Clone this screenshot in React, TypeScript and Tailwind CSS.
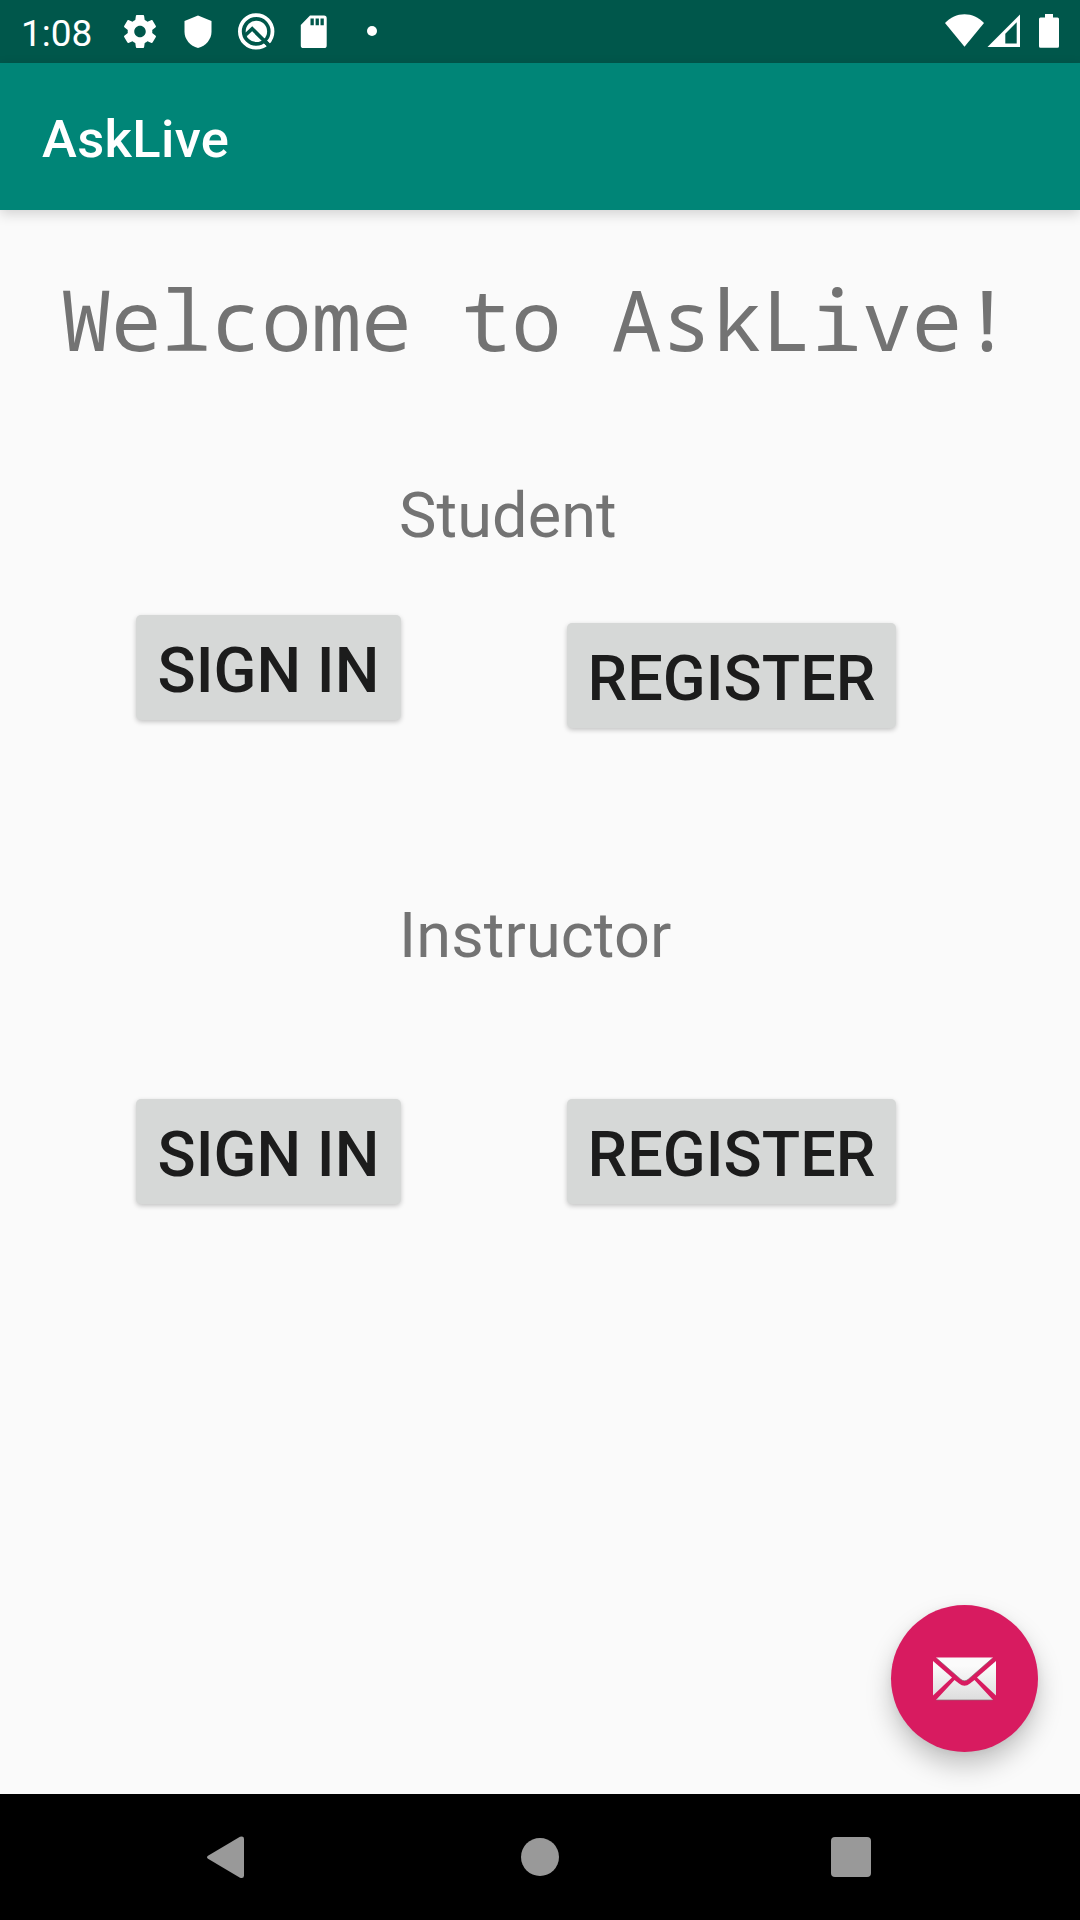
import React from 'react';
import clsx from 'clsx';

interface ActionButtonProps {
  label: string;
  className?: string;
}

function ActionButton({ label, className }: ActionButtonProps) {
  return (
    <button
      className={clsx(
        'h-[105px] rounded-[5px] bg-[#d6d8d7] pt-[19px] text-[63px] leading-[74px] font-medium text-[#1c1c1c] uppercase shadow-[0_2px_5px_rgba(0,0,0,0.22)] flex items-start justify-center whitespace-nowrap',
        className
      )}
    >
      {label}
    </button>
  );
}

function StatusBar() {
  return (
    <div className="flex h-[63px] items-start justify-between bg-[#00574b] text-white">
      <div className="flex h-full items-start">
        <span className="w-[124px] pt-3 pl-[21px] text-[37px] leading-[43px]">1:08</span>
        {/* settings */}
        <svg className="mt-[15px] h-[33px] w-8" viewBox="2.25 2 19.5 20" preserveAspectRatio="none" fill="currentColor">
          <path d="M19.43 12.98c.04-.32.07-.64.07-.98s-.03-.66-.07-.98l2.11-1.65c.19-.15.24-.42.12-.64l-2-3.46c-.12-.22-.39-.3-.61-.22l-2.49 1c-.52-.4-1.08-.73-1.69-.98l-.38-2.65C14.46 2.18 14.25 2 14 2h-4c-.25 0-.46.18-.49.42l-.38 2.65c-.61.25-1.17.59-1.69.98l-2.49-1c-.23-.09-.49 0-.61.22l-2 3.46c-.13.22-.07.49.12.64l2.11 1.65c-.04.32-.07.65-.07.98s.03.66.07.98l-2.11 1.65c-.19.15-.24.42-.12.64l2 3.46c.12.22.39.3.61.22l2.49-1c.52.4 1.08.73 1.69.98l.38 2.65c.03.24.24.42.49.42h4c.25 0 .46-.18.49-.42l.38-2.65c.61-.25 1.17-.59 1.69-.98l2.49 1c.23.09.49 0 .61-.22l2-3.46c.12-.22.07-.49-.12-.64l-2.11-1.65zM12 15.5c-1.93 0-3.5-1.57-3.5-3.5s1.57-3.5 3.5-3.5 3.5 1.57 3.5 3.5-1.57 3.5-3.5 3.5z" />
        </svg>
        {/* shield */}
        <svg className="mt-[15px] ml-7 h-[33px] w-7" viewBox="0 0 28 33" fill="currentColor">
          <path d="M14 .5 27.5 6v11C27.5 24 22 31 14 33 6 31 .5 24 .5 17V6z" />
        </svg>
        {/* radar */}
        <svg className="mt-[13px] ml-[26px] h-[37px] w-[37px]" viewBox="0 0 37 37" fill="none">
          <circle cx="18.2" cy="18.4" r="16.3" stroke="#fff" strokeWidth="3.8" />
          <circle cx="18.4" cy="18.4" r="10.7" fill="#fff" />
          <path d="M7.5 22 14.2 15.8 30 31.5" stroke="#00574b" strokeWidth="3.6" />
          <path d="M25.5 27 31 32.5" stroke="#00574b" strokeWidth="4" />
        </svg>
        {/* sd card */}
        <svg className="mt-[15px] ml-[25px] h-[33px] w-[27px]" viewBox="0 0 27 33">
          <path d="M10 .5h14a2.7 2.7 0 0 1 2.7 2.7v27A2.7 2.7 0 0 1 24 33H3.5A2.7 2.7 0 0 1 .8 30.2V10z" fill="#fff" />
          <path d="M10.5 3.5h3.3v6.8h-3.3zM15.6 3.5h3.3v6.8h-3.3zM20.5 3.5h3.3v6.8h-3.3z" fill="#00574b" />
        </svg>
        <span className="mt-[26px] ml-[40px] h-[10px] w-[10px] rounded-full bg-white" />
      </div>

      <div className="flex h-full items-start pr-[21px]">
        {/* wifi */}
        <svg className="mt-[14px] h-[33px] w-[39px]" viewBox="0 0 39 33" fill="currentColor">
          <path d="M0 9C5.5 3 12 .2 19.5 .2S33.5 3 39 9L19.5 32.7z" />
        </svg>
        {/* cell signal */}
        <svg className="mt-[14px] ml-[3px] h-[33px] w-[33px]" viewBox="0 0 33 33" fill="currentColor" fillRule="evenodd">
          <path d="M.5 33 33 .5V33zM18.3 19.7V29.5H29.7V8.3z" />
        </svg>
        {/* battery */}
        <svg className="mt-[14px] ml-[19px] h-[34px] w-5" viewBox="0 0 20 34" fill="currentColor">
          <path d="M6 0h8v3.5h4.5A1.5 1.5 0 0 1 20 5v27.3a1.5 1.5 0 0 1-1.5 1.5h-17A1.5 1.5 0 0 1 0 32.3V5a1.5 1.5 0 0 1 1.5-1.5H6z" />
        </svg>
      </div>
    </div>
  );
}

function MailIcon() {
  return (
    <svg className="h-[44px] w-[63px]" viewBox="0 0 63 44">
      <defs>
        <linearGradient id="paper" x1="0" y1="0" x2="0" y2="44" gradientUnits="userSpaceOnUse">
          <stop offset="0.2" stopColor="#fbfbfb" />
          <stop offset="1" stopColor="#dcdcdc" />
        </linearGradient>
      </defs>
      <g fill="url(#paper)">
        <path d="M3 .5H60L35.5 22Q31.5 25.5 27.5 22z" />
        <path d="M0 4 19 20.5 0 38.5z" />
        <path d="M63 4 44 20.5 63 38.5z" />
        <path d="M3 43 21.5 23 26 26.5Q31.5 31 37 26.5L41.5 23 60 43z" />
      </g>
      <path d="M4 1.5 27.5 22Q31.5 25.5 35.5 22L59 1.5" fill="none" stroke="#777" strokeOpacity="0.55" strokeWidth="1" />
      <path d="M3.5 43h56" stroke="#8a6a74" strokeOpacity="0.7" strokeWidth="1" />
    </svg>
  );
}

function NavigationBar() {
  return (
    <div className="flex h-[126px] items-center bg-black pl-[206px]">
      <svg className="h-[43px] w-[38px]" viewBox="0 0 38 43" fill="#999">
        <path d="M34 .8 2 19.8Q0 21.2 2 22.8L34 41.8Q38 43 38 39.5V3Q38-.3 34 .8z" />
      </svg>
      <div className="ml-[277px] h-[38px] w-[38px] rounded-full bg-[#999]" />
      <div className="ml-[272px] h-10 w-10 rounded-[4px] bg-[#999]" />
    </div>
  );
}

export default function App() {
  return (
    <div className="flex h-[1920px] w-[1080px] flex-col overflow-hidden bg-[#fafafa] font-['Roboto',sans-serif]">
      <StatusBar />
      <header className="z-10 h-[147px] bg-[#008577] pt-[45px] pl-[42px] shadow-[0_4px_12px_rgba(0,0,0,0.16)]">
        <h1 className="text-[52.5px] leading-[62px] font-medium tracking-[0.35px] text-white">AskLive</h1>
      </header>

      <main className="relative flex-1 pt-[59px] text-[#737373]">
        <h2 className="pl-[61px] font-['Noto_Sans_Mono',monospace] text-[84px] leading-[100px] tracking-[-0.36px] whitespace-nowrap">
          Welcome to AskLive!
        </h2>

        <section className="pt-[110px]">
          <h3 className="pl-[399px] text-[63px] leading-[74px] tracking-[0.1px]">Student</h3>
          <div className="mt-[62px] flex items-start gap-[166px] pl-[136px]">
            <ActionButton label="Sign in" className="w-[265px]" />
            <ActionButton label="Register" className="mt-2 w-[329px]" />
          </div>
        </section>

        <section className="pt-[171px]">
          <h3 className="pl-[399px] text-[63px] leading-[74px] tracking-[0.1px]">Instructor</h3>
          <div className="mt-[126px] flex items-start gap-[166px] pl-[136px]">
            <ActionButton label="Sign in" className="w-[265px]" />
            <ActionButton label="Register" className="w-[329px]" />
          </div>
        </section>

        <button className="absolute right-[42px] bottom-[42px] flex h-[147px] w-[147px] items-center justify-center rounded-full bg-[#d81b60] shadow-[0_14px_26px_rgba(0,0,0,0.22),0_2px_8px_rgba(0,0,0,0.06)]">
          <MailIcon />
        </button>
      </main>

      <NavigationBar />
    </div>
  );
}
